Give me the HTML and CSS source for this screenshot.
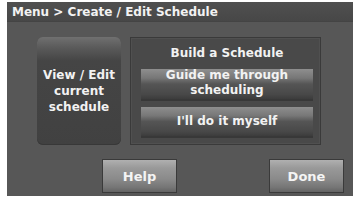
FILE: index.html
```html
<!DOCTYPE html>
<html>
<head>
<meta charset="utf-8">
<link rel="stylesheet" href="styles.css">
</head>
<body>
<div class="screen">
  <div class="header">Menu &gt; Create / Edit Schedule</div>
  <div class="main">
    <div class="top-row">
      <div class="view-btn">View / Edit<br>current<br>schedule</div>
      <div class="panel">
        <div class="panel-title">Build a Schedule</div>
        <div class="opt-btn guide">Guide me through<br>scheduling</div>
        <div class="opt-btn self">I'll do it myself</div>
      </div>
    </div>
    <div class="bottom-row">
      <div class="foot-btn">Help</div>
      <div class="foot-btn">Done</div>
    </div>
  </div>
</div>
</body>
</html>
```

FILE: styles.css
```css
html, body {
  margin: 0;
  padding: 0;
  background: #ffffff;
}
body {
  width: 358px;
  height: 202px;
  overflow: hidden;
  font-family: "DejaVu Sans", "Verdana", sans-serif;
  font-weight: bold;
  color: #f2f2f2;
}
.screen {
  margin: 2px 0 0 7px;
  width: 346px;
  height: 194px;
  background: #575757;
  display: flex;
  flex-direction: column;
}
.header {
  height: 20px;
  line-height: 20px;
  padding-left: 5px;
  font-size: 12px;
  background: linear-gradient(#505050, #474747);
  border-bottom: 1px solid #444;
  box-sizing: border-box;
}
.main {
  flex: 1;
  display: flex;
  flex-direction: column;
  padding: 15px 0 0 30px;
}
.top-row {
  display: flex;
  gap: 9px;
  height: 108px;
}
.view-btn {
  width: 84px;
  border-radius: 6px;
  background: linear-gradient(#707070 0%, #5a5a5a 10%, #454545 22%, #414141 100%);
  box-shadow: inset 0 -1px 0 #383838;
  display: flex;
  align-items: center;
  justify-content: center;
  text-align: center;
  font-size: 12px;
  line-height: 16px;
}
.panel {
  width: 191px;
  box-sizing: border-box;
  border: 1px solid #3a3a3a;
  box-shadow: inset 0 0 0 1px #505050;
  background: #494949;
  display: flex;
  flex-direction: column;
  padding: 7px 7px 6px 10px;
}
.panel-title {
  text-align: center;
  font-size: 12px;
  line-height: 16px;
  height: 16px;
  margin-bottom: 8px;
}
.opt-btn {
  height: 32px;
  box-sizing: border-box;
  text-align: center;
  font-size: 12px;
  line-height: 15px;
  display: flex;
  align-items: center;
  justify-content: center;
  background: linear-gradient(#8e8e8e 0%, #777 30%, #555 50%, #484848 85%, #3c3c3c 100%);
  border-bottom: 2px solid #383838;
}
.guide {
  padding-bottom: 2px;
}
.self {
  margin-top: 6px;
  height: 31px;
}
.bottom-row {
  display: flex;
  justify-content: space-between;
  padding: 0 9px 0 65px;
  margin-top: 14px;
}
.foot-btn {
  width: 75px;
  height: 34px;
  box-sizing: border-box;
  border: 1px solid #3a3a3a;
  background: linear-gradient(#b0b0b0 0%, #999 25%, #8a8a8a 60%, #767676 85%, #636363 100%);
  display: flex;
  align-items: center;
  justify-content: center;
  font-size: 13px;
  color: #f4f4f4;
}
```
